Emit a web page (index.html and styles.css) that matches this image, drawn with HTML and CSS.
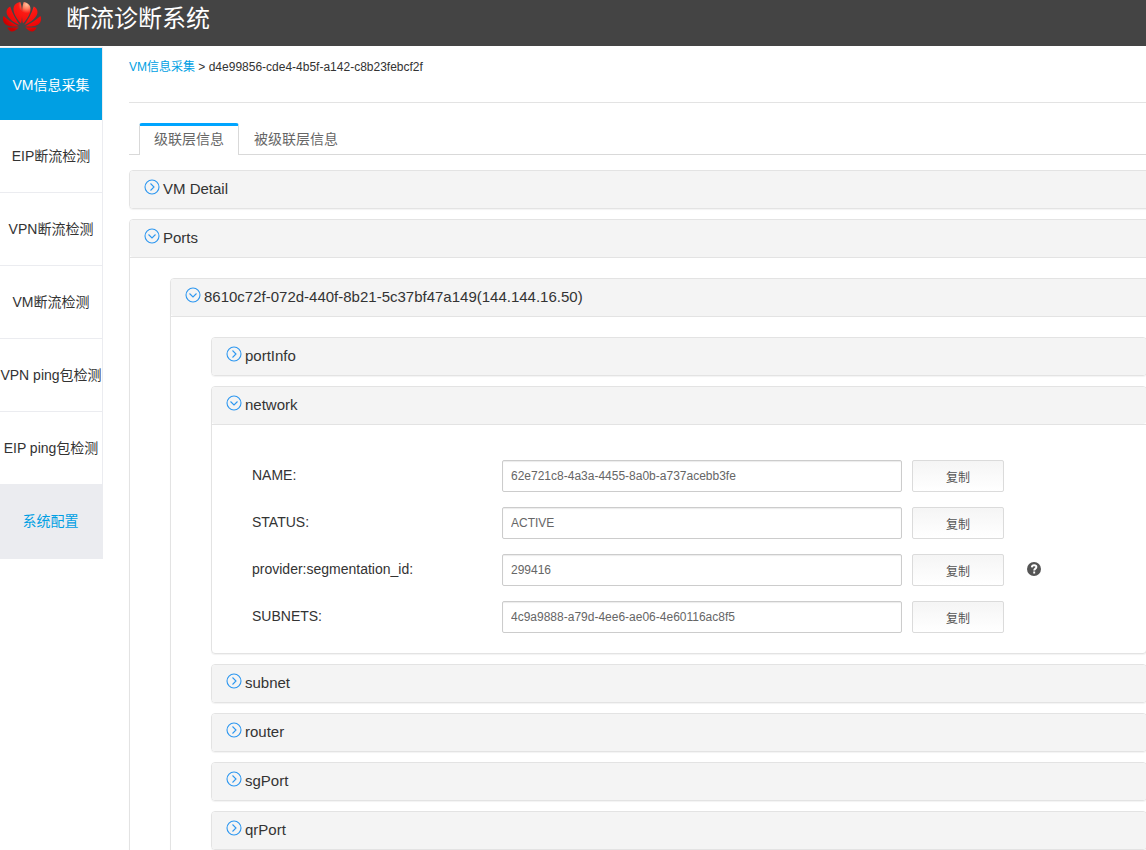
FILE: index.html
```html
<!DOCTYPE html>
<html lang="zh-CN">
<head>
<meta charset="utf-8">
<title>断流诊断系统</title>
<link rel="stylesheet" href="styles.css">
</head>
<body>
<svg class="sprite" aria-hidden="true">
  <symbol id="closed" viewBox="0 0 16 16"><circle cx="8" cy="8" r="7"/><path d="M6.500 4.500 10 8l-3.500 3.500"/></symbol>
  <symbol id="open" viewBox="0 0 16 16"><circle cx="8" cy="8" r="7"/><path d="M4.500 6.500 8 10l3.500-3.500"/></symbol>
</svg>
<header class="topbar">
  <svg class="logo" viewBox="-1 0 44 36" role="img" aria-label="Logo">
    <defs>
      <radialGradient id="red" gradientUnits="userSpaceOnUse" cx="26" cy="5" r="30">
        <stop offset="0" stop-color="#ffc09a"/><stop offset="0.15" stop-color="#ff7a5c"/><stop offset="0.3" stop-color="#fb1a14"/><stop offset="0.75" stop-color="#f00808"/><stop offset="1" stop-color="#c80000"/>
      </radialGradient>
    </defs>
    <g fill="url(#red)">
      <path d="M20 25C14.500 19 10.500 12 12.500 6.500 13.500 4 16 2.500 19.200 2 21.500 9 21.500 18 20 25Z"/>
      <path d="M22 25C20.500 18 20.500 9 22.800 2 26 2.500 28.500 4 29.500 6.500 31.500 12 27.500 19 22 25Z"/>
      <path d="M18.500 26.500C10.500 23 4.500 18 4.600 12.500 4.700 10 6 8 8.500 6.800 10.500 14 15 21 18.500 26.500Z"/>
      <path d="M23.500 26.500C27 21 31.500 14 33.500 6.800 36 8 37.300 10 37.400 12.500 37.500 18 31.500 23 23.500 26.500Z"/>
      <path d="M17.500 27.800C11 28.500 4.500 28 1.800 23.800.5 21.500.5 19 1.500 17 6.500 21.500 12 25 17.500 27.800Z"/>
      <path d="M24.500 27.800C30 25 35.500 21.500 40.500 17 41.500 19 41.500 21.500 40.200 23.800 37.500 28 31 28.500 24.500 27.800Z"/>
      <path d="M17.500 29C14.500 32 11.500 34 9 33 7.500 32.200 6.200 31 5.500 29Z"/>
      <path d="M24.500 29C27.500 32 30.500 34 33 33 34.500 32.200 35.800 31 36.500 29Z"/>
    </g>
  </svg>
  <h1 class="title">断流诊断系统</h1>
</header>
<div class="layout">
  <nav class="sidebar">
    <a class="nav-item active" href="#vm">VM信息采集</a>
    <a class="nav-item" href="#eip">EIP断流检测</a>
    <a class="nav-item" href="#vpn">VPN断流检测</a>
    <a class="nav-item" href="#vm-check">VM断流检测</a>
    <a class="nav-item" href="#vpn-ping">VPN ping包检测</a>
    <a class="nav-item" href="#eip-ping">EIP ping包检测</a>
    <a class="nav-item config" href="#config">系统配置</a>
  </nav>
  <main class="content">
    <div class="crumbs"><a href="#vm">VM信息采集</a> &gt; d4e99856-cde4-4b5f-a142-c8b23febcf2f</div>
    <div class="tabs" role="tablist">
      <button class="tab selected" role="tab" aria-selected="true">级联层信息</button>
      <button class="tab" role="tab" aria-selected="false">被级联层信息</button>
    </div>
    <div class="panels">
      <section class="panel">
        <button class="panel-head"><svg class="arrow"><use href="#closed"/></svg><span>VM Detail</span></button>
      </section>
      <section class="panel">
        <button class="panel-head"><svg class="arrow"><use href="#open"/></svg><span>Ports</span></button>
        <div class="panel-body">
          <section class="panel">
            <button class="panel-head"><svg class="arrow"><use href="#open"/></svg><span>8610c72f-072d-440f-8b21-5c37bf47a149(144.144.16.50)</span></button>
            <div class="panel-body">
              <section class="panel">
                <button class="panel-head"><svg class="arrow"><use href="#closed"/></svg><span>portInfo</span></button>
              </section>
              <section class="panel">
                <button class="panel-head"><svg class="arrow"><use href="#open"/></svg><span>network</span></button>
                <div class="panel-body fields">
                  <div class="field"><label for="name">NAME:</label><input id="name" value="62e721c8-4a3a-4455-8a0b-a737acebb3fe"><button class="copy">复制</button></div>
                  <div class="field"><label for="status">STATUS:</label><input id="status" value="ACTIVE"><button class="copy">复制</button></div>
                  <div class="field"><label for="segment">provider:segmentation_id:</label><input id="segment" value="299416"><button class="copy">复制</button>
                    <button class="help" aria-label="帮助"><svg viewBox="0 0 14 14"><circle cx="7" cy="7" r="7"/><path d="M4.800 5.400C4.900 3.900 5.700 3.200 7.100 3.200 8.500 3.200 9.400 3.900 9.400 5.100 9.400 6.700 7.200 6.600 7.200 8.500M7.200 9.500V11.400"/></svg></button></div>
                  <div class="field"><label for="subnets">SUBNETS:</label><input id="subnets" value="4c9a9888-a79d-4ee6-ae06-4e60116ac8f5"><button class="copy">复制</button></div>
                </div>
              </section>
              <section class="panel">
                <button class="panel-head"><svg class="arrow"><use href="#closed"/></svg><span>subnet</span></button>
              </section>
              <section class="panel">
                <button class="panel-head"><svg class="arrow"><use href="#closed"/></svg><span>router</span></button>
              </section>
              <section class="panel">
                <button class="panel-head"><svg class="arrow"><use href="#closed"/></svg><span>sgPort</span></button>
              </section>
              <section class="panel">
                <button class="panel-head"><svg class="arrow"><use href="#closed"/></svg><span>qrPort</span></button>
              </section>
            </div>
          </section>
        </div>
      </section>
    </div>
  </main>
</div>
</body>
</html>
```

FILE: styles.css
```css
* { box-sizing: border-box; }
body {
  margin: 0;
  height: 100vh;
  overflow: hidden;
  background: #fff;
  color: #333;
  font-family: "Liberation Sans", "Noto Sans CJK SC", sans-serif;
  font-size: 14px;
}
button, input { font-family: inherit; }
button { cursor: pointer; }
a { text-decoration: none; }
.sprite { display: none; }
.topbar {
  display: flex;
  align-items: flex-start;
  gap: 22px;
  height: 46px;
  background: #444;
}
.logo { width: 44px; height: 34px; }
.title {
  margin: 0;
  color: #fff;
  font-size: 24px;
  font-weight: 400;
  line-height: 38px;
}
.layout { display: flex; align-items: flex-start; }
.sidebar {
  flex: 0 0 103px;
  margin-top: 1px;
  border-top: 1px solid #ebecf0;
  border-right: 1px solid #ebecf0;
}
.nav-item {
  display: flex;
  align-items: center;
  justify-content: center;
  height: 73px;
  padding-bottom: 2px;
  border-bottom: 1px solid #ebecf0;
  color: #333;
  white-space: nowrap;
}
.nav-item.active { height: 72px; padding: 0; border: 0; background: #009fe3; color: #fff; }
.nav-item.config { height: 74px; margin-right: -1px; padding: 0 2px 4px 0; background: #ebecf0; color: #009fe3; }
.content { flex: 1; min-width: 0; padding-left: 26px; overflow: hidden; }
.crumbs {
  height: 57px;
  border-bottom: 1px solid #e3e3e3;
  font-size: 12px;
  line-height: 42px;
}
.crumbs a { color: #009fe3; }
.tabs {
  display: flex;
  height: 52px;
  padding: 20px 10px 0;
  border-bottom: 1px solid #d9d9d9;
}
.tab {
  height: 32px;
  padding: 0 15px 2px;
  border: 0;
  background: none;
  color: #666;
  font-size: 14px;
}
.tab.selected {
  padding: 0 14px 6px;
  border: 1px solid #d9d9d9;
  border-top: 3px solid #00a5ff;
  border-bottom: 0;
  border-radius: 3px 3px 0 0;
  background: #fff;
}
.panels { margin: 15px -83px 0 0; }
.panel {
  border: 1px solid #e3e3e3;
  border-radius: 4px;
  box-shadow: 0 1px 1px rgba(0, 0, 0, 0.05);
}
.panel + .panel { margin-top: 10px; }
.panel-head {
  display: flex;
  align-items: center;
  gap: 3px;
  width: 100%;
  height: 37px;
  padding: 0 14px 2px;
  border: 0;
  border-radius: 3px;
  background: #f4f4f4;
  color: #333;
  font-size: 15px;
  text-align: left;
}
.arrow {
  width: 16px;
  height: 16px;
  margin-bottom: 3px;
  fill: none;
  stroke: #2d97f0;
  stroke-width: 1.1;
}
.panel-body { padding: 20px 40px; border-top: 1px solid #e3e3e3; }
.fields {
  display: flex;
  flex-direction: column;
  gap: 15px;
  padding-top: 35px;
}
.field { display: flex; align-items: center; }
.field label { width: 250px; padding-bottom: 2px; }
.field input {
  width: 400px;
  height: 32px;
  padding: 0 8px;
  border: 1px solid #ccc;
  border-radius: 2px;
  box-shadow: inset 0 1px 1px rgba(0, 0, 0, 0.08);
  color: #666;
  font-size: 12px;
}
.copy {
  width: 92px;
  height: 32px;
  margin-left: 10px;
  padding: 0;
  border: 1px solid #dbdbdb;
  border-radius: 2px;
  background: linear-gradient(#f5f5f5, #fff);
  color: #555;
  font-size: 12px;
}
.help {
  display: flex;
  margin-left: 23px;
  padding: 0 0 2px;
  border: 0;
  background: none;
}
.help svg { width: 14px; height: 14px; fill: #555; }
.help path { fill: none; stroke: #fff; stroke-width: 1.9; }
```
